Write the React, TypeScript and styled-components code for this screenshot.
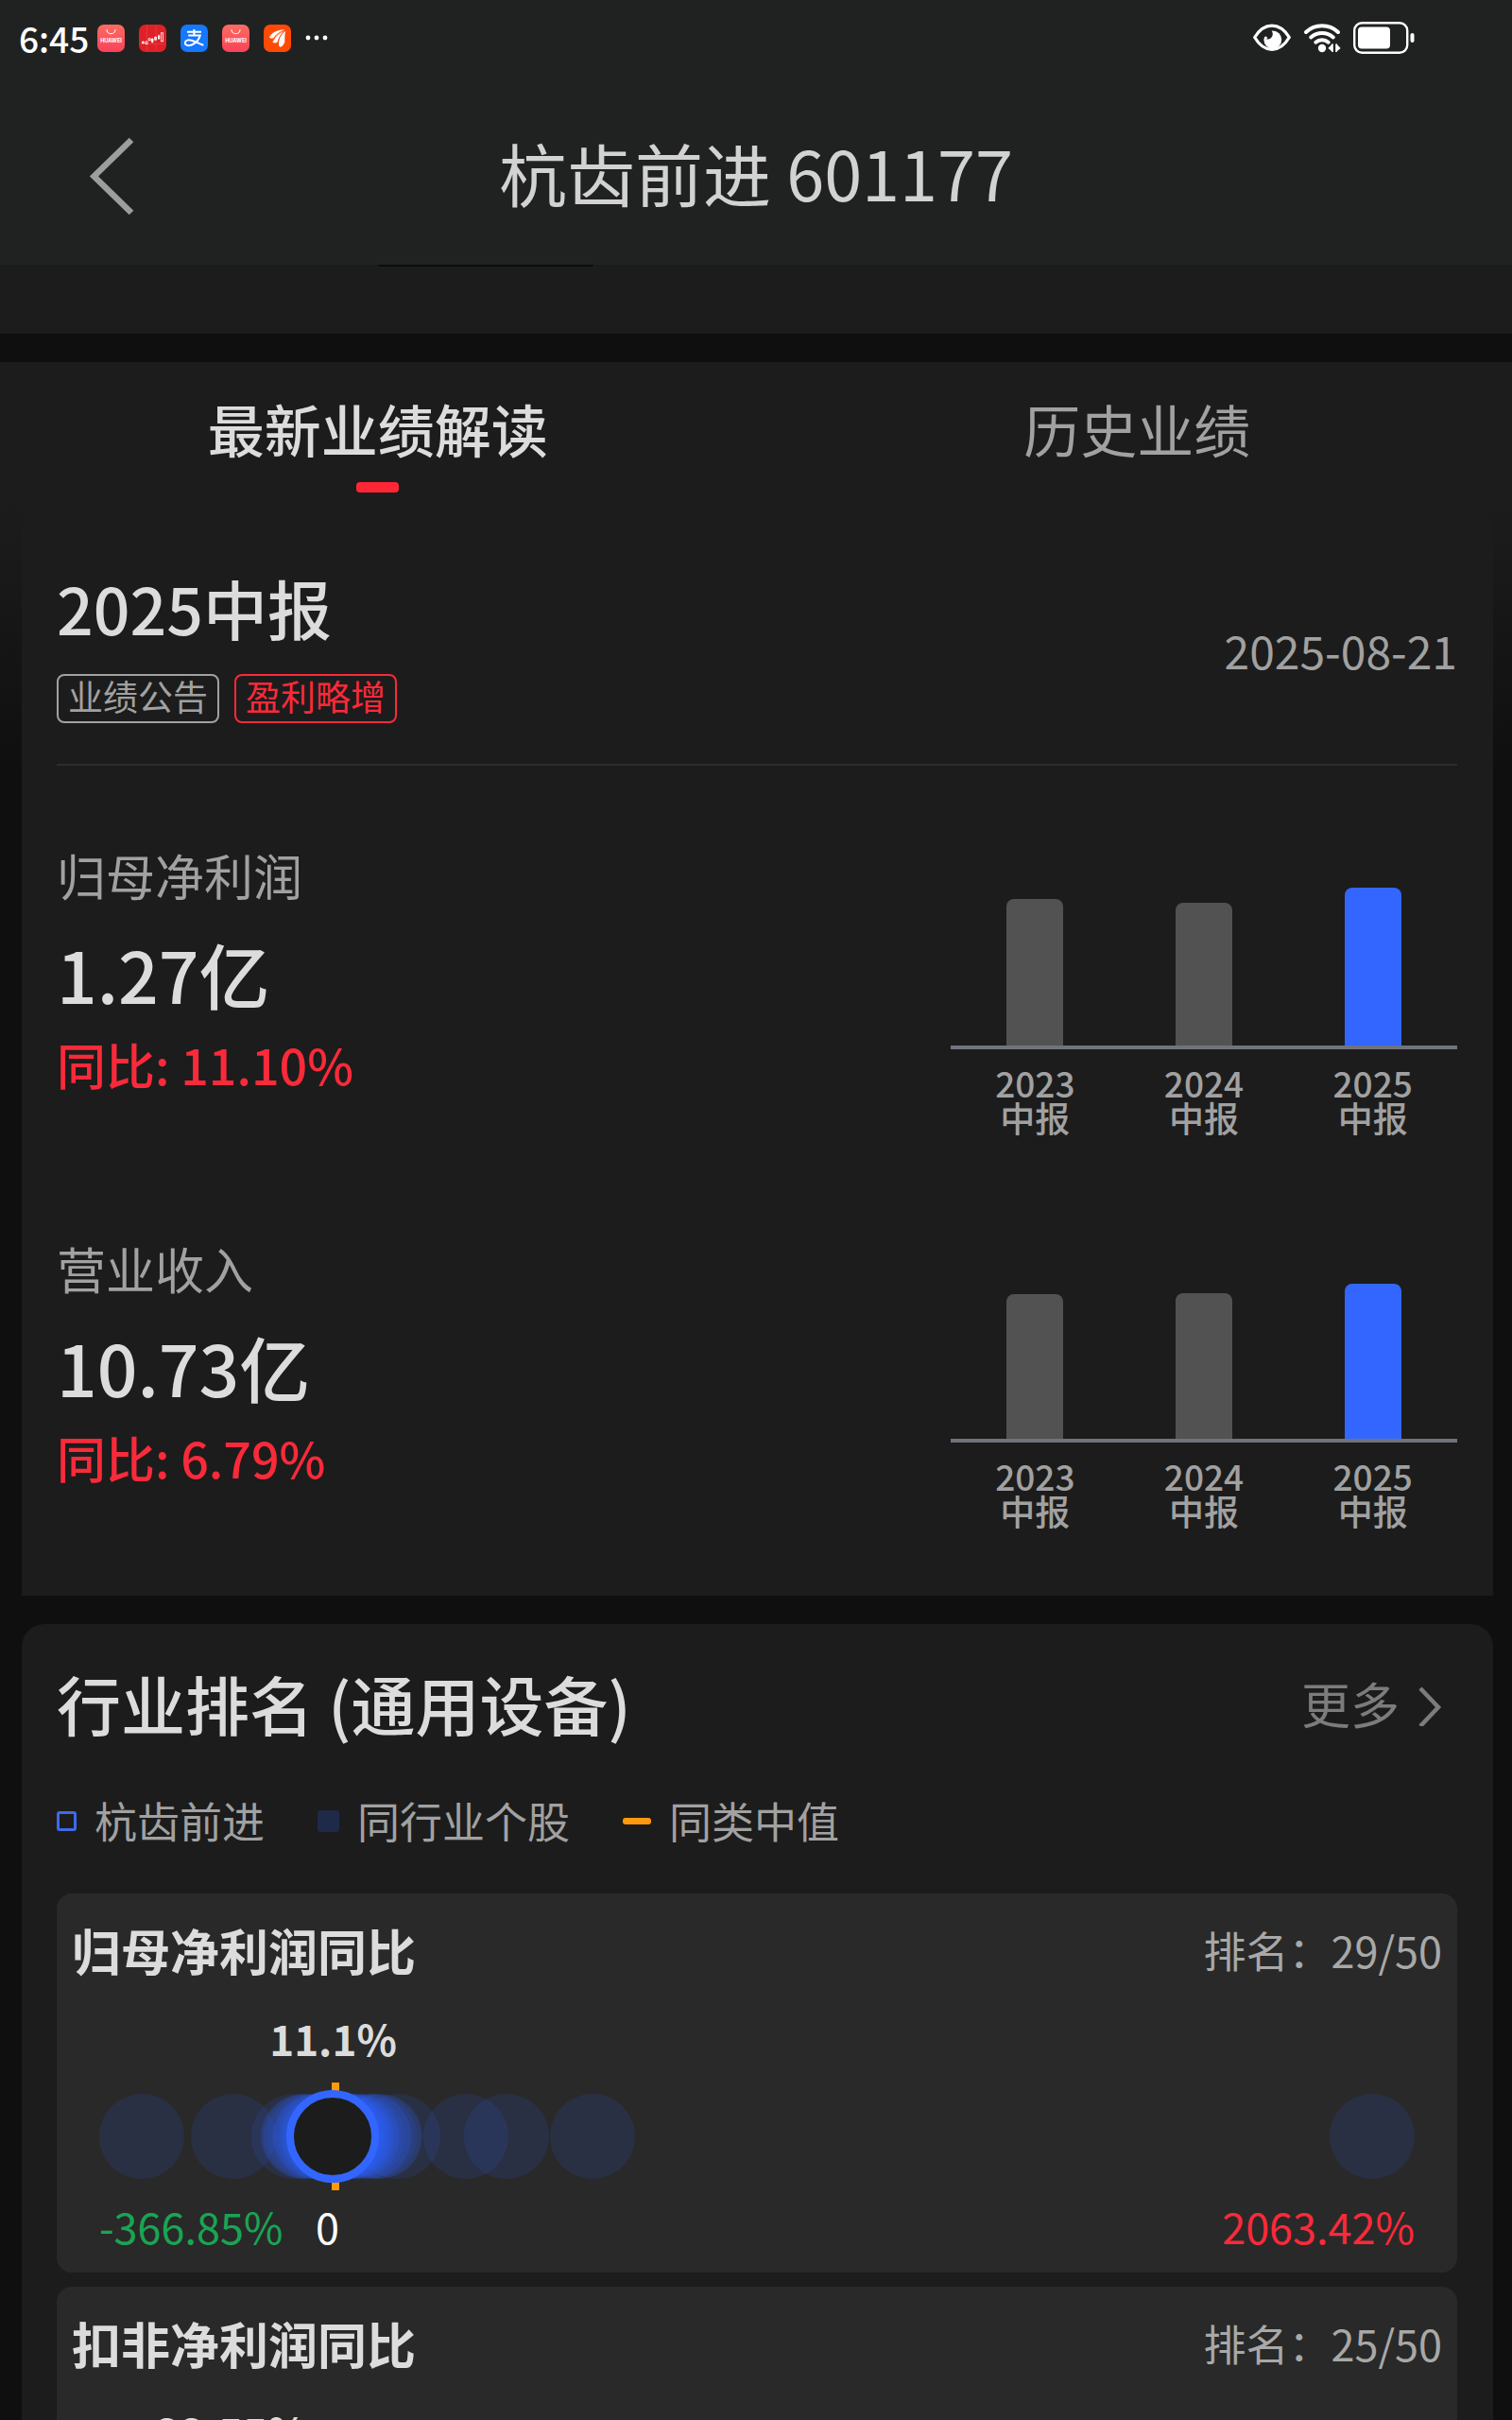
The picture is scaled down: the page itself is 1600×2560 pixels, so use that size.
import React from "react";
import styled, { createGlobalStyle } from "styled-components";

const color = {
  bar: "#202221",
  page: "#0f0f0f",
  card: "#1c1c1c",
  inner: "#292929",
  line: "#2d2d2d",
  strong: "#dcdcdc",
  muted: "#a1a1a1",
  faint: "#7c7c7c",
  red: "#f92a3a",
  green: "#19a553",
  blue: "#3366ff",
  grayBar: "#525252",
  axis: "#70737c",
  orange: "#ff9a0f",
};

const GlobalStyle = createGlobalStyle`
  *, *::before, *::after { box-sizing: border-box; }
  html, body { margin: 0; padding: 0; background: ${color.page}; }
  body, button {
    font-family: "Noto Sans CJK SC", "Noto Sans", sans-serif;
  }
  button { margin: 0; padding: 0; border: 0; background: none; color: inherit; cursor: pointer; }
  h1, h2, h3, p, ul, dl, dd { margin: 0; padding: 0; font-weight: inherit; }
  ul { list-style: none; }
  svg { display: block; }
`;

const Screen = styled.div`
  display: flex;
  flex-direction: column;
  height: 100vh;
  overflow: hidden;
  background: ${color.page};
  color: ${color.strong};
`;

const TopArea = styled.header`
  flex: none;
  background: ${color.bar};
`;

const StatusBar = styled.div`
  display: flex;
  align-items: center;
  justify-content: space-between;
  height: 80px;
  padding: 0 103px 0 20px;
  color: #fff;
`;

const StatusGroup = styled.div<{ $gap: number }>`
  display: flex;
  align-items: center;
  gap: ${(p) => p.$gap}px;
`;

const Clock = styled.span`
  font-size: 37px;
  line-height: 40px;
  font-weight: 500;
`;

const NavBar = styled.div`
  display: grid;
  grid-template-columns: 1fr auto 1fr;
  align-items: center;
  height: 200px;
  padding: 4px 92px 0;
`;

const BackButton = styled.button`
  justify-self: start;
  color: #9d9d9d;
`;

const NavTitle = styled.h1`
  font-size: 72px;
  line-height: 100px;
  color: #d2d2d2;
`;

const Scroll = styled.main`
  flex: 1;
  min-height: 0;
  overflow: hidden;
`;

const PreviousSection = styled.div`
  height: 73px;
  padding-left: 25%;
  background: ${color.card};
`;

const PreviousTile = styled.div`
  width: 19%;
  height: 2px;
  border-radius: 0 0 4px 4px;
  background: #0b0b0b;
`;

const Tabs = styled.div`
  display: grid;
  grid-template-columns: 1fr 1fr;
  column-gap: 10px;
  margin-top: 30px;
  padding: 25px 0 14px 3px;
  background: ${color.card};
`;

const Tab = styled.button<{ $active: boolean }>`
  display: flex;
  flex-direction: column;
  align-items: center;
  gap: 12px;
  font-size: 60px;
  line-height: 90px;
  font-weight: ${(p) => (p.$active ? 500 : 400)};
  color: ${(p) => (p.$active ? color.strong : color.muted)};

  &::after {
    content: "";
    width: 45px;
    height: 11px;
    border-radius: 4px;
    background: ${(p) => (p.$active ? "#ff2636" : "transparent")};
  }
`;

const Body = styled.div`
  display: flex;
  flex-direction: column;
  gap: 30px;
  padding: 0 20px 40px 23px;
  background: linear-gradient(${color.card}, ${color.page} 280px);
`;

const ReportCard = styled.section`
  padding: 74px 38px 46px 37px;
  background: ${color.card};
`;

const ReportHead = styled.div`
  display: flex;
  align-items: center;
  justify-content: space-between;
  padding-bottom: 43px;
  border-bottom: 2px solid ${color.line};
`;

const ReportTitle = styled.h2`
  font-size: 68px;
  line-height: 68px;
  font-weight: 500;
`;

const TagRow = styled.div`
  display: flex;
  gap: 16px;
  margin-top: 36px;
`;

const Tag = styled.span<{ $tone: string }>`
  height: 52px;
  padding: 0 10px;
  border: 2px solid ${(p) => p.$tone};
  border-radius: 8px;
  font-size: 37px;
  line-height: 42px;
  color: ${(p) => p.$tone};
`;

const ReportDate = styled.time`
  font-size: 48px;
  line-height: 60px;
  color: ${color.muted};
`;

const MetricRow = styled.div`
  display: flex;
  justify-content: space-between;
  padding: 82px 0 25px;
`;

const MetricName = styled.h3`
  font-size: 52px;
  line-height: 68px;
  color: ${color.muted};
`;

const MetricValue = styled.p`
  margin: 20px 0 12px;
  font-size: 75px;
  line-height: 100px;
  font-weight: 500;
`;

const MetricChange = styled.p`
  font-size: 52px;
  line-height: 68px;
  font-weight: 500;
  color: ${color.red};
`;

const Chart = styled.div`
  flex: 0 1 536px;
`;

const Bars = styled.div`
  display: grid;
  grid-template-columns: repeat(3, 1fr);
  align-items: end;
  justify-items: center;
  height: 218px;
  border-bottom: 4px solid ${color.axis};
`;

const Bar = styled.div<{ $current: boolean }>`
  width: 60px;
  border-radius: 8px 8px 0 0;
  background: ${(p) => (p.$current ? color.blue : color.grayBar)};
`;

const BarLabels = styled.div`
  display: grid;
  grid-template-columns: repeat(3, 1fr);
  margin-top: 17px;
`;

const BarLabel = styled.div`
  display: flex;
  flex-direction: column;
  align-items: center;
  font-size: 37px;
  line-height: 37px;
  font-weight: 500;
  color: ${color.muted};
`;

const RankCard = styled.section`
  padding: 40px 38px 40px 37px;
  border-radius: 24px;
  background: ${color.card};
`;

const RankHead = styled.div`
  display: flex;
  align-items: center;
  justify-content: space-between;
`;

const RankTitle = styled.h2`
  font-size: 68px;
  line-height: 88px;
  font-weight: 500;
`;

const MoreButton = styled.button`
  display: flex;
  align-items: center;
  gap: 20px;
  padding-right: 16px;
  font-size: 52px;
  line-height: 68px;
  color: ${color.faint};
`;

const Legend = styled.ul`
  display: flex;
  gap: 56px;
  margin: 50px 0 47px;
`;

const LegendItem = styled.li`
  display: flex;
  align-items: center;
  gap: 19px;
  font-size: 45px;
  line-height: 60px;
  color: ${color.muted};
`;

const OwnMark = styled.i`
  width: 21px;
  height: 21px;
  border: 3px solid #4069e8;
  border-radius: 3px;
`;

const PeerMark = styled.i`
  width: 23px;
  height: 23px;
  border-radius: 3px;
  background: #1f2a49;
`;

const MedianMark = styled.i`
  width: 30px;
  height: 7px;
  border-radius: 3px;
  background: ${color.orange};
`;

const RankList = styled.div`
  display: flex;
  flex-direction: column;
  gap: 15px;
`;

const RankItem = styled.article`
  padding: 24px 0 19px;
  border-radius: 16px;
  background: ${color.inner};
`;

const RankItemHead = styled.div`
  display: flex;
  align-items: center;
  justify-content: space-between;
  padding: 0 16px;
`;

const RankItemTitle = styled.h3`
  font-size: 52px;
  line-height: 72px;
  font-weight: 700;
`;

const RankPosition = styled.span`
  font-size: 45px;
  line-height: 60px;
  color: #a8a8a8;
`;

const Track = styled.div<{ $height: number }>`
  position: relative;
  height: ${(p) => p.$height}px;
  margin: 0 90px;
`;

const OwnValue = styled.span`
  position: absolute;
  top: 0;
  transform: translateX(-50%);
  font-size: 44px;
  line-height: 60px;
  font-weight: 700;
`;

const OwnTrack = styled(Track)`
  margin-top: 27px;
  margin-bottom: 17px;
`;

const PeerDot = styled.span`
  position: absolute;
  top: 12px;
  width: 90px;
  height: 90px;
  margin-left: -45px;
  border-radius: 50%;
  background: rgba(51, 102, 255, 0.12);
`;

const MedianTick = styled.span`
  position: absolute;
  top: 0;
  width: 8px;
  height: 114px;
  margin-left: -4px;
  background: ${color.orange};
`;

const OwnDot = styled.span`
  position: absolute;
  top: 8px;
  width: 98px;
  height: 98px;
  margin-left: -49px;
  border: 8px solid ${color.blue};
  border-radius: 50%;
  background: ${color.card};
`;

const Scale = styled.div`
  position: relative;
  display: flex;
  justify-content: space-between;
  margin: 8px 45px 0;
  font-size: 45px;
  line-height: 60px;
`;

const ScaleEnd = styled.span<{ $tone: string }>`
  color: ${(p) => p.$tone};
`;

const ZeroAxis = styled.div`
  position: absolute;
  inset: 0 45px;
`;

const ZeroLabel = styled.span`
  position: absolute;
  transform: translateX(-50%);
  color: #fff;
`;

const AppGalleryIcon = () => (
  <svg width="29" height="29" viewBox="0 0 29 29" aria-hidden="true">
    <defs>
      <linearGradient id="gallery" x1="0" y1="0" x2="0" y2="1">
        <stop offset="0" stopColor="#fb6c62" />
        <stop offset="1" stopColor="#fb4258" />
      </linearGradient>
    </defs>
    <rect width="29" height="29" rx="7" fill="url(#gallery)" />
    <path d="M10 5.500a4.500 4.200 0 0 0 9 0" fill="none" stroke="#fff" strokeWidth="1.1" strokeLinecap="round" />
    <text x="14.500" y="18.600" textAnchor="middle" fontSize="5.600" fontWeight="700" fill="#fff" fontFamily="Inter, sans-serif">
      HUAWEI
    </text>
  </svg>
);

const StockIcon = () => (
  <svg width="29" height="29" viewBox="0 0 29 29" aria-hidden="true">
    <rect width="29" height="29" rx="7" fill="#df2127" />
    <path d="M8.500 1v27M2 20.500h25M18 2v25" stroke="#ea4a4a" strokeWidth="0.5" />
    <g fill="#fff">
      <rect x="3" y="18" width="2.600" height="2" />
      <rect x="13" y="15" width="2.400" height="3.600" />
      <rect x="20" y="11.500" width="2.200" height="3.600" />
    </g>
    <g fill="none" stroke="#fff" strokeWidth="0.800">
      <rect x="7" y="18" width="2" height="2.600" />
      <rect x="10.200" y="14.800" width="2" height="2" />
      <rect x="16.600" y="13.400" width="2" height="2.600" />
      <rect x="23.400" y="8.800" width="2.200" height="9" />
      <path d="M4.300 17.200v3.400M14.200 14.200v5.400M17.600 12.400v4.400M21.100 10.600v5.400" />
    </g>
  </svg>
);

const AlipayIcon = () => (
  <svg width="29" height="29" viewBox="0 0 29 29" aria-hidden="true">
    <rect width="29" height="29" rx="7" fill="#1677ff" />
    <path
      d="M14.400 5v6M7 7.800h15M8.200 11.600h12.600c-1.200 4.400-4.600 8.200-9 9.900-3.600 1.400-7 .4-6.900-2.300.1-2.500 3.300-3.500 6.800-2.400 4 1.200 8.300 3.500 12.600 5"
      fill="none"
      stroke="#fff"
      strokeWidth="2"
    />
  </svg>
);

const WingIcon = () => (
  <svg width="29" height="29" viewBox="0 0 29 29" aria-hidden="true">
    <rect width="29" height="29" rx="7" fill="#ff4a05" />
    <g fill="#fff">
      <path d="M6 13.500C8 8.500 14 5.500 22.500 5.200 17 7.500 13 10 10.500 14c-1.400 1-3 .9-4.500-.5z" />
      <path d="M9.500 18.500C11 12.500 16 8 22.800 6.200 18.500 9.500 16 13.500 14.500 18.500c-1.300 1.300-3.400 1.200-5 0z" />
      <path d="M16 21.500C15.500 15.500 18 10 23.200 6.800 22 11 22.500 15 22.300 18.500c-.8 2.500-2.500 4.500-4.300 5.300-1.200-.4-1.700-1.200-2-2.300z" />
    </g>
    <path d="M10.200 17c2-5 6.500-8.500 12-10.500M15.300 20.500c.2-6 3-10.500 7.500-13.800" stroke="#ff4a05" strokeWidth="0.9" fill="none" />
  </svg>
);

const DotsIcon = () => (
  <svg width="24" height="6" viewBox="0 0 24 6" fill="currentColor" aria-hidden="true">
    <circle cx="3" cy="3" r="2.400" />
    <circle cx="12" cy="3" r="2.400" />
    <circle cx="21" cy="3" r="2.400" />
  </svg>
);

const EyeIcon = () => (
  <svg width="40" height="30" viewBox="0 0 40 30" aria-hidden="true">
    <path
      d="M1.700 14.500C7 6 13 2.200 20 2.200S33 6 38.300 14.500C33 23.500 27 27.300 20 27.300S7 23.500 1.700 14.500z"
      fill="none"
      stroke="#fff"
      strokeWidth="3.200"
      strokeLinejoin="round"
    />
    <circle cx="20.800" cy="17" r="9.400" fill="#fff" />
    <circle cx="15.200" cy="11" r="5.600" fill={color.bar} />
    <circle cx="13.400" cy="15" r="1.600" fill="#fff" />
  </svg>
);

const WifiIcon = () => (
  <svg width="40" height="32" viewBox="0 0 40 32" aria-hidden="true">
    <g fill="none" stroke="#fff" strokeWidth="4" strokeLinecap="round">
      <path d="M3 10c9.500-9 24.500-9 34 0" />
      <path d="M8.200 15.500c6.700-6 16.900-6 23.600 0" />
      <path d="M13.300 20.700c3.900-3.300 9.500-3.300 13.400 0" />
    </g>
    <circle cx="20" cy="27" r="4.200" fill="#fff" />
    <path d="M26.400 27l4.800-5v9zM39.600 27l-4.600-5v9z" fill="#fff" />
    <path d="M31 22.500v8.500M35 22.500v8.500" stroke="#fff" strokeWidth="1.600" />
  </svg>
);

const BatteryIcon = () => (
  <svg width="65" height="34" viewBox="0 0 65 34" aria-hidden="true">
    <rect x="1.200" y="1.200" width="56" height="31.600" rx="8" fill="none" stroke="#fff" strokeWidth="2.400" />
    <rect x="5" y="5.500" width="34" height="23" rx="4" fill="#fff" />
    <rect x="60.500" y="12" width="4" height="10" rx="2" fill="#fff" />
  </svg>
);

const BackIcon = () => (
  <svg width="56" height="92" viewBox="0 0 56 92" fill="none" stroke="currentColor" aria-hidden="true">
    <path d="M47 12L7.500 50.500 47 89" strokeWidth="6.500" />
  </svg>
);

const ChevronIcon = () => (
  <svg width="25" height="48" viewBox="0 0 25 48" fill="none" stroke="currentColor" aria-hidden="true">
    <path d="M2 8l19 20L2 48" strokeWidth="4.500" />
  </svg>
);

interface Metric {
  name: string;
  value: string;
  change: string;
  bars: { year: string; height: number }[];
}

const metrics: Metric[] = [
  {
    name: "归母净利润",
    value: "1.27亿",
    change: "11.10%",
    bars: [
      { year: "2023", height: 155 },
      { year: "2024", height: 151 },
      { year: "2025", height: 167 },
    ],
  },
  {
    name: "营业收入",
    value: "10.73亿",
    change: "6.79%",
    bars: [
      { year: "2023", height: 153 },
      { year: "2024", height: 154 },
      { year: "2025", height: 164 },
    ],
  },
];

interface Ranking {
  name: string;
  rank: string;
  min: number;
  max: number;
  own: number;
  median: number;
  peers: number[];
}

const rankings: Ranking[] = [
  {
    name: "归母净利润同比",
    rank: "29/50",
    min: -366.85,
    max: 2063.42,
    own: 11.1,
    median: 15,
    peers: [
      -366.85, -186, -67, -47, -45, -43, -35, -26, -24, -20, -14, -9, -6, -2, 1, 3, 5, 8, 10, 13, 15, 18, 21, 24, 27,
      30, 33, 36, 39, 43, 46, 50, 56, 58, 68, 81, 83, 92, 101, 103, 139, 273, 354, 524, 2063.42,
    ],
  },
  {
    name: "扣非净利润同比",
    rank: "25/50",
    min: -80,
    max: 1325,
    own: 22.55,
    median: 22,
    peers: [-80, -30, -10, 0, 8, 15, 22, 30, 41, 55, 80, 130, 260, 1325],
  },
];

const MetricBlock = ({ metric }: { metric: Metric }) => (
  <MetricRow>
    <div>
      <MetricName>{metric.name}</MetricName>
      <MetricValue>{metric.value}</MetricValue>
      <MetricChange>同比: {metric.change}</MetricChange>
    </div>
    <Chart>
      <Bars>
        {metric.bars.map((bar, i) => (
          <Bar key={bar.year} $current={i === metric.bars.length - 1} style={{ height: bar.height }} />
        ))}
      </Bars>
      <BarLabels>
        {metric.bars.map((bar) => (
          <BarLabel key={bar.year}>
            <span>{bar.year}</span>
            <span>中报</span>
          </BarLabel>
        ))}
      </BarLabels>
    </Chart>
  </MetricRow>
);

const RankingBlock = ({ item }: { item: Ranking }) => {
  const left = (value: number) => ({ left: `${((value - item.min) / (item.max - item.min)) * 100}%` });
  return (
    <RankItem>
      <RankItemHead>
        <RankItemTitle>{item.name}</RankItemTitle>
        <RankPosition>排名：{item.rank}</RankPosition>
      </RankItemHead>
      <OwnTrack $height={60}>
        <OwnValue style={left(item.own)}>{item.own}%</OwnValue>
      </OwnTrack>
      <Track $height={114}>
        {item.peers.map((peer) => (
          <PeerDot key={peer} style={left(peer)} />
        ))}
        <MedianTick style={left(item.median)} />
        <OwnDot style={left(item.own)} />
      </Track>
      <Scale>
        <ScaleEnd $tone={color.green}>{item.min}%</ScaleEnd>
        <ZeroAxis>
          <ZeroLabel style={left(0)}>0</ZeroLabel>
        </ZeroAxis>
        <ScaleEnd $tone={color.red}>{item.max}%</ScaleEnd>
      </Scale>
    </RankItem>
  );
};

export default function App() {
  const [tab, setTab] = React.useState(0);
  return (
    <>
      <GlobalStyle />
      <Screen>
        <TopArea>
          <StatusBar>
            <StatusGroup $gap={9}>
              <Clock>6:45</Clock>
              <StatusGroup $gap={15}>
                <AppGalleryIcon />
                <StockIcon />
                <AlipayIcon />
                <AppGalleryIcon />
                <WingIcon />
                <DotsIcon />
              </StatusGroup>
            </StatusGroup>
            <StatusGroup $gap={13}>
              <EyeIcon />
              <WifiIcon />
              <BatteryIcon />
            </StatusGroup>
          </StatusBar>
          <NavBar>
            <BackButton type="button" aria-label="返回">
              <BackIcon />
            </BackButton>
            <NavTitle>杭齿前进 601177</NavTitle>
          </NavBar>
        </TopArea>
        <Scroll>
          <PreviousSection>
            <PreviousTile />
          </PreviousSection>
          <Tabs role="tablist">
            {["最新业绩解读", "历史业绩"].map((label, i) => (
              <Tab key={label} type="button" role="tab" aria-selected={tab === i} $active={tab === i} onClick={() => setTab(i)}>
                {label}
              </Tab>
            ))}
          </Tabs>
          <Body>
            <ReportCard>
              <ReportHead>
                <div>
                  <ReportTitle>2025中报</ReportTitle>
                  <TagRow>
                    <Tag $tone={color.muted}>业绩公告</Tag>
                    <Tag $tone={color.red}>盈利略增</Tag>
                  </TagRow>
                </div>
                <ReportDate dateTime="2025-08-21">2025-08-21</ReportDate>
              </ReportHead>
              {metrics.map((metric) => (
                <MetricBlock key={metric.name} metric={metric} />
              ))}
            </ReportCard>
            <RankCard>
              <RankHead>
                <RankTitle>行业排名 (通用设备)</RankTitle>
                <MoreButton type="button">
                  更多
                  <ChevronIcon />
                </MoreButton>
              </RankHead>
              <Legend>
                <LegendItem>
                  <OwnMark />
                  杭齿前进
                </LegendItem>
                <LegendItem>
                  <PeerMark />
                  同行业个股
                </LegendItem>
                <LegendItem>
                  <MedianMark />
                  同类中值
                </LegendItem>
              </Legend>
              <RankList>
                {rankings.map((item) => (
                  <RankingBlock key={item.name} item={item} />
                ))}
              </RankList>
            </RankCard>
          </Body>
        </Scroll>
      </Screen>
    </>
  );
}
